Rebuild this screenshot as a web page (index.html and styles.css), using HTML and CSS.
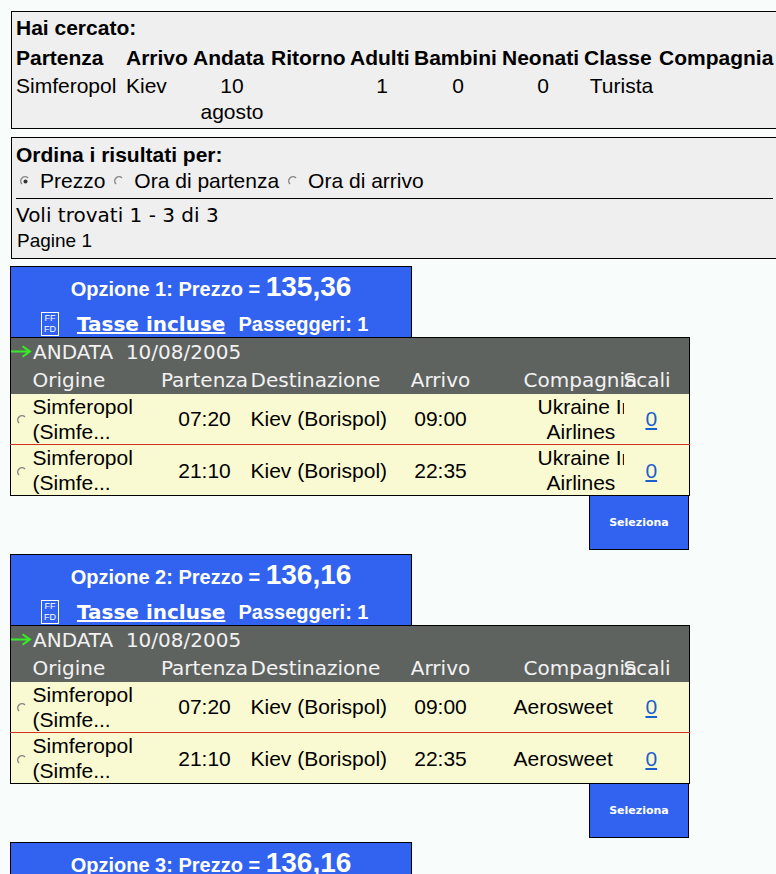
FILE: index.html
```html
<!DOCTYPE html>
<html lang="it">
<head>
<meta charset="utf-8">
<title>Voli</title>
<link rel="stylesheet" href="styles.css">
</head>
<body>
<section class="box search">
  <div class="title">Hai cercato:</div>
  <table class="criteria">
    <colgroup><col class="c1"><col class="c2"><col class="c3"><col class="c4"><col class="c5"><col class="c6"><col class="c7"><col class="c8"><col class="c9"></colgroup>
    <tr><th>Partenza</th><th>Arrivo</th><th>Andata</th><th>Ritorno</th><th>Adulti</th><th>Bambini</th><th>Neonati</th><th>Classe</th><th>Compagnia</th></tr>
    <tr><td class="left">Simferopol</td><td class="left">Kiev</td><td>10 agosto</td><td></td><td>1</td><td>0</td><td>0</td><td>Turista</td><td></td></tr>
  </table>
</section>
<section class="box sort">
  <div class="title">Ordina i risultati per:</div>
  <div class="radios">
    <label class="radio-label"><svg class="radio" viewBox="0 0 11 11"><path d="M2 8A4 4 0 0 1 8 2" fill="none" stroke="#888" stroke-width="1.5"/><circle cx="5.5" cy="5.5" r="2" fill="#333"/></svg>Prezzo</label>
    <label class="radio-label"><svg class="radio" viewBox="0 0 11 11"><path d="M2 8A4 4 0 0 1 8 2" fill="none" stroke="#888" stroke-width="1.5"/></svg>Ora di partenza</label>
    <label class="radio-label"><svg class="radio" viewBox="0 0 11 11"><path d="M2 8A4 4 0 0 1 8 2" fill="none" stroke="#888" stroke-width="1.5"/></svg>Ora di arrivo</label>
  </div>
  <hr class="rule">
  <div class="found">Voli trovati 1 - 3 di 3</div>
  <div class="pages">Pagine 1</div>
</section>

<article class="option">
  <header class="price">
    <div class="price-line">Opzione 1: Prezzo = <span class="amount">135,36</span></div>
    <div class="fare-line"><span class="ff"><span>FF</span><span>FD</span></span><a class="tax" href="#">Tasse incluse</a><span>Passeggeri: 1</span></div>
  </header>
  <table class="flights">
    <colgroup><col class="f1"><col class="f2"><col class="f3"><col class="f4"><col class="f5"><col class="f6"><col class="f7"></colgroup>
    <tr class="head"><td colspan="7"><div class="leg"><svg class="arrow" viewBox="0 0 20 12"><path d="M0 6H18M11 1L18 6L11 11" fill="none" stroke="#33ee22" stroke-width="2"/></svg>ANDATA&nbsp; 10/08/2005</div></td></tr>
    <tr class="head cols"><td></td><td>Origine</td><td class="ctr">Partenza</td><td>Destinazione</td><td class="ctr">Arrivo</td><td class="comp">Compagnia</td><td>Scali</td></tr>
    <tr class="row"><td><svg class="radio small" viewBox="0 0 11 11"><path d="M2 8A4 4 0 0 1 8 2" fill="none" stroke="#888" stroke-width="1.5"/></svg></td><td>Simferopol (Simfe...</td><td class="ctr">07:20</td><td class="dest">Kiev (Borispol)</td><td class="ctr">09:00</td><td><span class="air1">Ukraine Intl</span><span class="air2">Airlines</span></td><td class="stops"><a href="#">0</a></td></tr>
    <tr class="row"><td><svg class="radio small" viewBox="0 0 11 11"><path d="M2 8A4 4 0 0 1 8 2" fill="none" stroke="#888" stroke-width="1.5"/></svg></td><td>Simferopol (Simfe...</td><td class="ctr">21:10</td><td class="dest">Kiev (Borispol)</td><td class="ctr">22:35</td><td><span class="air1">Ukraine Intl</span><span class="air2">Airlines</span></td><td class="stops"><a href="#">0</a></td></tr>
  </table>
  <div class="actions"><button class="select" type="button">Seleziona</button></div>
</article>

<article class="option">
  <header class="price">
    <div class="price-line">Opzione 2: Prezzo = <span class="amount">136,16</span></div>
    <div class="fare-line"><span class="ff"><span>FF</span><span>FD</span></span><a class="tax" href="#">Tasse incluse</a><span>Passeggeri: 1</span></div>
  </header>
  <table class="flights">
    <colgroup><col class="f1"><col class="f2"><col class="f3"><col class="f4"><col class="f5"><col class="f6"><col class="f7"></colgroup>
    <tr class="head"><td colspan="7"><div class="leg"><svg class="arrow" viewBox="0 0 20 12"><path d="M0 6H18M11 1L18 6L11 11" fill="none" stroke="#33ee22" stroke-width="2"/></svg>ANDATA&nbsp; 10/08/2005</div></td></tr>
    <tr class="head cols"><td></td><td>Origine</td><td class="ctr">Partenza</td><td>Destinazione</td><td class="ctr">Arrivo</td><td class="comp">Compagnia</td><td>Scali</td></tr>
    <tr class="row"><td><svg class="radio small" viewBox="0 0 11 11"><path d="M2 8A4 4 0 0 1 8 2" fill="none" stroke="#888" stroke-width="1.5"/></svg></td><td>Simferopol (Simfe...</td><td class="ctr">07:20</td><td class="dest">Kiev (Borispol)</td><td class="ctr">09:00</td><td class="air3">Aerosweet</td><td class="stops"><a href="#">0</a></td></tr>
    <tr class="row"><td><svg class="radio small" viewBox="0 0 11 11"><path d="M2 8A4 4 0 0 1 8 2" fill="none" stroke="#888" stroke-width="1.5"/></svg></td><td>Simferopol (Simfe...</td><td class="ctr">21:10</td><td class="dest">Kiev (Borispol)</td><td class="ctr">22:35</td><td class="air3">Aerosweet</td><td class="stops"><a href="#">0</a></td></tr>
  </table>
  <div class="actions"><button class="select" type="button">Seleziona</button></div>
</article>

<article class="option">
  <header class="price">
    <div class="price-line">Opzione 3: Prezzo = <span class="amount">136,16</span></div>
  </header>
</article>
</body>
</html>
```
FILE: styles.css
```css
html, body { margin: 0; height: 874px; overflow: hidden; }
body {
  background: #f8fdfb;
  color: #000;
  font-family: "Liberation Sans", Arial, sans-serif;
  font-size: 21px;
  padding: 11px 0 0 11px;
  box-sizing: border-box;
  width: 776px;
}
table { border-collapse: collapse; table-layout: fixed; }
th, td { padding: 0; }

.box {
  width: 780px;
  background: #efefef;
  border: 1px solid #000;
  box-sizing: border-box;
}
.title { font-weight: bold; line-height: 28px; }
.search { height: 118px; padding: 2px 0 0 4px; margin-bottom: 8px; }
.criteria { width: 760px; line-height: 26px; }
.criteria th { text-align: left; font-weight: bold; height: 31px; white-space: nowrap; }
.criteria td { text-align: center; vertical-align: top; }
.criteria td.left { text-align: left; }
.c1 { width: 110px; } .c2 { width: 67px; } .c3 { width: 78px; } .c4 { width: 79px; }
.c5 { width: 64px; } .c6 { width: 88px; } .c7 { width: 82px; } .c8 { width: 75px; } .c9 { width: 117px; }

.sort { height: 122px; padding: 3px 0 0 4px; margin-bottom: 7px; }
.title + .radios { margin-top: -1px; }
.radios { display: flex; gap: 9px; line-height: 25px; padding-left: 4px; }
.radio-label { display: flex; align-items: center; gap: 9px; }
.radio { width: 11px; height: 11px; flex: none; margin-top: 2px; }
.rule { border: 0; border-top: 1px solid #000; margin: 5px 0 0 0; width: 757px; }
.found { font-family: "DejaVu Sans", Verdana, sans-serif; font-size: 20px; line-height: 32px; }
.pages { font-size: 19px; line-height: 20px; padding-left: 1px; }

.option { margin: 0 0 4px -1px; width: 679px; }
.price {
  width: 402px;
  height: 71px;
  box-sizing: border-box;
  background: #3163f0;
  color: #fff;
  border: 1px solid #000;
  border-bottom: 0;
  font-weight: bold;
  text-align: center;
}
.price-line { font-size: 20px; line-height: 40px; white-space: nowrap; }
.amount { font-size: 28px; }
.fare-line { display: flex; align-items: center; padding-left: 30px; height: 30px; font-size: 20px; }
.ff {
  display: grid;
  width: 18px;
  height: 24px;
  box-sizing: border-box;
  border: 1px solid #fff;
  font-size: 9px;
  font-weight: normal;
  line-height: 11px;
  margin-right: 18px;
  letter-spacing: 0;
}
.tax {
  color: #fff;
  font-family: "DejaVu Sans", Verdana, sans-serif;
  font-size: 20px;
  margin-right: 13px;
}

.flights { width: 679px; border: 1px solid #000; font-size: 21px; }
.f1 { width: 22px; } .f2 { width: 126px; } .f3 { width: 92px; } .f4 { width: 145px; } .f5 { width: 90px; } .f6 { width: 138px; } .f7 { width: 66px; }
.head td { background: #5f6360; color: #f2f2f2; font-family: "DejaVu Sans", Verdana, sans-serif; font-size: 20px; white-space: nowrap; }
.head { height: 28px; }
.leg { display: flex; align-items: center; }
.arrow { width: 21px; height: 13px; margin-right: 1px; flex: none; }
.comp { padding-left: 38px !important; }
.row { background: #fafad2; height: 51px; border-bottom: 1px solid #d03020; line-height: 25px; }
.row:last-child { border-bottom: 0; }
.row td { vertical-align: middle; overflow: hidden; }
.ctr { text-align: center; }
.dest { white-space: nowrap; }
.small { margin: 4px 0 0 6px; display: block; }
.air1, .air2 { display: block; white-space: nowrap; }
.air1 { margin-left: 52px; }
.air2 { margin-left: 61px; }
.air3 { padding-left: 28px; }
.stops { text-align: center; padding-right: 10px !important; }
.stops a { color: #1a5fd0; }

.actions { display: flex; justify-content: flex-end; }
.select {
  width: 100px;
  height: 55px;
  margin-top: -1px;
  background: #3163f0;
  color: #fff;
  border: 1px solid #000;
  font-family: "DejaVu Sans", Verdana, sans-serif;
  font-size: 11px;
  font-weight: bold;
  padding: 0;
}
```
